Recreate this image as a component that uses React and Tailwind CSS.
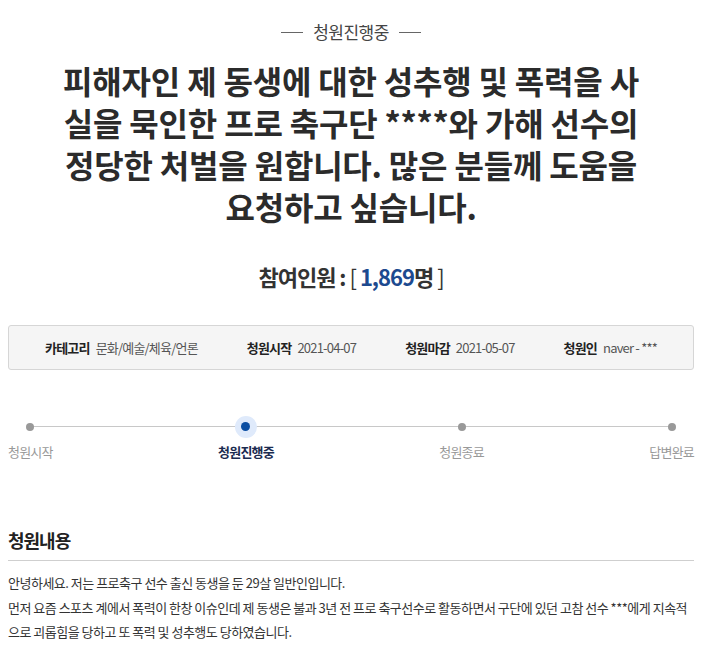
import React from 'react'

const font = { fontFamily: '"Noto Sans CJK KR", "Noto Sans", sans-serif' }

const steps = [
  { label: '청원시작', active: false },
  { label: '청원진행중', active: true },
  { label: '청원종료', active: false },
  { label: '답변완료', active: false },
]

const info = [
  ['카테고리', '문화/예술/체육/언론'],
  ['청원시작', '2021-04-07'],
  ['청원마감', '2021-05-07'],
  ['청원인', 'naver - ***'],
]

const body = [
  '안녕하세요. 저는 프로축구 선수 출신 동생을 둔 29살 일반인입니다.',
  '먼저 요즘 스포츠 계에서 폭력이 한창 이슈인데 제 동생은 불과 3년 전 프로 축구선수로 활동하면서 구단에 있던 고참 선수 ***에게 지속적',
  '으로 괴롭힘을 당하고 또 폭력 및 성추행도 당하였습니다.',
]

export default function App() {
  return (
    <div className="min-h-screen bg-white px-2 pr-[9px] text-[#333]" style={font}>
      {/* status */}
      <div className="flex items-center justify-center gap-[10px] pt-[20px]">
        <span className="h-px w-[22px] bg-[#666]" />
        <span className="text-[17px] leading-[24px] text-[#444] tracking-[-0.5px]">청원진행중</span>
        <span className="h-px w-[22px] bg-[#666]" />
      </div>

      {/* title */}
      <h1 className="mt-[15px] text-center text-[32px] font-bold leading-[42px] tracking-[-0.2px] text-[#2b2b2b]">
        피해자인 제 동생에 대한 성추행 및 폭력을 사<br />
        실을 묵인한 프로 축구단 ****와 가해 선수의<br />
        정당한 처벌을 원합니다. 많은 분들께 도움을<br />
        요청하고 싶습니다.
      </h1>

      {/* count */}
      <div className="mt-[34px] text-center text-[22px] leading-[30px] tracking-[-1px] text-[#333]">
        <span className="font-bold">참여인원 : </span>
        <span>[ </span>
        <span className="font-bold text-[#1d4a8f]">1,869</span>
        <span className="font-bold">명</span>
        <span> ]</span>
      </div>

      {/* info box */}
      <div className="mt-[34px] flex h-[45px] items-center justify-between rounded-[3px] border border-[#d6d6d6] bg-[#f5f5f5] px-[36px] text-[13px] tracking-[-0.8px]">
        {info.map(([k, v]) => (
          <div key={k} className="flex items-center gap-[6px]">
            <span className="font-bold text-[#222]">{k}</span>
            <span className="text-[#555]">{v}</span>
          </div>
        ))}
      </div>

      {/* timeline */}
      <div className="relative mt-[51px] flex justify-between">
        <div className="absolute left-[23px] right-[23px] top-[5px] h-px bg-[#c8c8c8]" />
        {steps.map(s => (
          <div key={s.label} className="relative flex flex-col items-center">
            <div className="flex h-[11px] items-center justify-center">
              {s.active ? (
                <span className="flex h-[22px] w-[22px] items-center justify-center rounded-full bg-[#dfeafb]">
                  <span className="h-[9px] w-[9px] rounded-full bg-[#0b4ea2]" />
                </span>
              ) : (
                <span className="h-[8px] w-[8px] rounded-full bg-[#999]" />
              )}
            </div>
            <span
              className={
                'mt-[11px] text-[13px] leading-[18px] tracking-[-0.8px] ' +
                (s.active ? 'font-bold text-[#1b2b50]' : 'text-[#999]')
              }
            >
              {s.label}
            </span>
          </div>
        ))}
      </div>

      {/* content */}
      <h2 className="mt-[66px] text-[18px] font-bold leading-[26px] tracking-[-1px] text-[#222]">청원내용</h2>
      <div className="mt-[7px] h-px bg-[#cfcfcf]" />
      <div className="mt-[10px] text-[13px] leading-[24.5px] tracking-[-0.5px] text-[#333]">
        {body.map(line => (
          <p key={line} className="whitespace-nowrap">{line}</p>
        ))}
      </div>
    </div>
  )
}
